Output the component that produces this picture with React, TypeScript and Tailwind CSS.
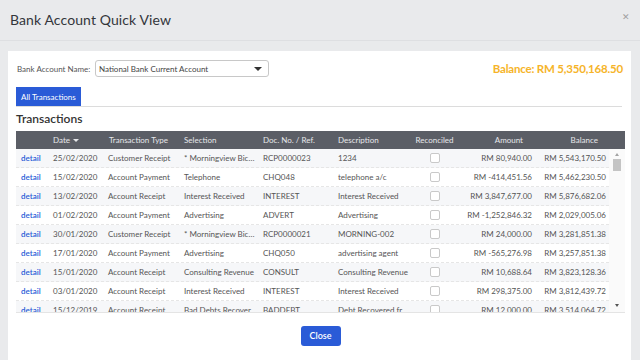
const rows = [
  ["25/02/2020", "Customer Receipt", "* Morningview Bicycles", "RCP0000023", "1234", "RM 80,940.00", "RM 5,543,170.50"],
  ["15/02/2020", "Account Payment", "Telephone", "CHQ048", "telephone a/c", "RM -414,451.56", "RM 5,462,230.50"],
  ["13/02/2020", "Account Receipt", "Interest Received", "INTEREST", "Interest Received", "RM 3,847,677.00", "RM 5,876,682.06"],
  ["01/02/2020", "Account Payment", "Advertising", "ADVERT", "Advertising", "RM -1,252,846.32", "RM 2,029,005.06"],
  ["30/01/2020", "Customer Receipt", "* Morningview Bicycles", "RCP0000021", "MORNING-002", "RM 24,000.00", "RM 3,281,851.38"],
  ["17/01/2020", "Account Payment", "Advertising", "CHQ050", "advertising agent", "RM -565,276.98", "RM 3,257,851.38"],
  ["15/01/2020", "Account Receipt", "Consulting Revenue", "CONSULT", "Consulting Revenue", "RM 10,688.64", "RM 3,823,128.36"],
  ["03/01/2020", "Account Receipt", "Interest Received", "INTEREST", "Interest Received", "RM 298,375.00", "RM 3,812,439.72"],
  ["15/12/2019", "Account Receipt", "Bad Debts Recovered", "BADDEBT", "Debt Recovered from client", "RM 12,000.00", "RM 3,514,064.72"],
];

const cols = "grid-cols-[32px_55px_76px_79px_75px_78px_47px_78px_73px]";

export default function App() {
  return (
    <div className="w-[640px] h-[360px] overflow-hidden bg-[#e9eaec] flex flex-col font-['Lato',sans-serif] text-[#555]">
      {/* header */}
      <div className="h-[41px] shrink-0 border-b border-[#dedfe2] flex items-center justify-between pl-[10px] pr-[10px]">
        <h1 className="text-[14px] text-[#33363b] leading-none tracking-[0.1px]">Bank Account Quick View</h1>
        <span className="mb-[8px] text-[#a0a0a0] text-[9px] leading-none">✕</span>
      </div>

      {/* panel */}
      <div className="mt-[10px] ml-[8px] w-[623px] flex-1 bg-white pl-[8px] pr-[6px] flex flex-col">
        <div className="pt-[9px] flex items-center h-[26px] pr-[2px]">
          <span className="ml-[1px] w-[78px] text-[8px] text-[#555]">Bank Account Name:</span>
          <div className="w-[174px] h-[17px] border border-[#c8c8c8] rounded-[3px] flex items-center justify-between pl-[3px] pr-[6px]">
            <span className="text-[8px] text-[#444]">National Bank Current Account</span>
            <span className="w-0 h-0 border-l-[4px] border-r-[4px] border-t-[4px] border-l-transparent border-r-transparent border-t-[#333]" />
          </div>
          <span className="ml-auto text-[11.5px] font-bold text-[#f6b429] tracking-[-0.2px]">Balance: RM 5,350,168.50</span>
        </div>

        <div className="mt-[10px] mr-[3px] border-b border-[#dcdcdc] flex">
          <div className="h-[19px] px-[5px] bg-[#2a5bd7] text-white text-[8px] flex items-center">All Transactions</div>
        </div>

        <div className="h-[24px] flex items-center text-[12px] font-semibold text-[#333]">Transactions</div>

        {/* table header */}
        <div className="flex h-[18px] bg-[#5b5e66] text-[#e6e7ea] text-[8px]">
          <div className={`grid ${cols} w-[593px] items-center`}>
            <div />
            <div className="pl-[5px] flex items-center gap-[3px]">
              Date
              <span className="w-0 h-0 border-l-[3px] border-r-[3px] border-t-[3px] border-l-transparent border-r-transparent border-t-[#e6e7ea]" />
            </div>
            <div className="pl-[6px]">Transaction Type</div>
            <div className="pl-[5px]">Selection</div>
            <div className="pl-[5px]">Doc. No. / Ref.</div>
            <div className="pl-[5px]">Description</div>
            <div className="text-center">Reconciled</div>
            <div className="text-right pr-[13px]">Amount</div>
            <div className="text-right pr-[11px]">Balance</div>
          </div>
          <div className="w-[16px]" />
        </div>

        {/* table body */}
        <div className="flex h-[164px] overflow-hidden border-b border-[#e4e4e4]">
          <div className="w-[593px]">
            {rows.map((r, i) => (
              <div
                key={i}
                className={`grid ${cols} h-[19px] items-center text-[8px] border-b border-dashed border-[#e6e6e6] ${i % 2 === 0 ? "bg-[#f6f7f9]" : "bg-white"}`}
              >
                <div className="pl-[5px] text-[#2a5bd7] font-semibold">detail</div>
                <div className="pl-[5px]">{r[0]}</div>
                <div className="pl-[5px] truncate">{r[1]}</div>
                <div className="pl-[5px] truncate">{r[2]}</div>
                <div className="pl-[5px]">{r[3]}</div>
                <div className="pl-[5px] truncate">{r[4]}</div>
                <div className="flex justify-center">
                  <span className="w-[10px] h-[10px] border border-[#c9c9c9] rounded-[2px] bg-white" />
                </div>
                <div className="text-right pr-[4px] whitespace-nowrap">{r[5]}</div>
                <div className="text-right pr-[3px] whitespace-nowrap">{r[6]}</div>
              </div>
            ))}
          </div>
          {/* scrollbar */}
          <div className="w-[16px] bg-[#fafafa] flex flex-col items-center pt-[4px] pb-[5px]">
            <span className="w-0 h-0 border-l-[2.5px] border-r-[2.5px] border-b-[3px] border-l-transparent border-r-transparent border-b-[#a3a3a3]" />
            <span className="mt-[3px] w-[8px] h-[12px] bg-[#c4c4c4]" />
            <span className="mt-auto w-0 h-0 border-l-[2.5px] border-r-[2.5px] border-t-[3px] border-l-transparent border-r-transparent border-t-[#555]" />
          </div>
        </div>

        <div className="mt-[13px] flex justify-center">
          <button className="w-[40px] h-[20px] rounded-[3px] bg-[#2a5bd7] text-white text-[9px] font-semibold">Close</button>
        </div>
      </div>
    </div>
  );
}
